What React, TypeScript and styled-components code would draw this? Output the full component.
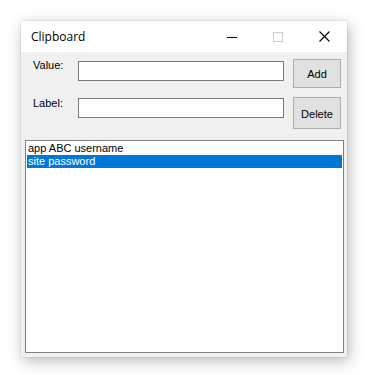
import React from "react";
import styled, { createGlobalStyle } from "styled-components";

const Global = createGlobalStyle`
  html, body { margin: 0; padding: 0; background: #ffffff; }
  body { font-family: "Liberation Sans", Arial, sans-serif; }
`;

const Page = styled.div`
  width: 372px;
  height: 375px;
  padding: 21px 0 0 21px;
  box-sizing: border-box;
`;

const Window = styled.div`
  width: 326px;
  height: 336px;
  display: flex;
  flex-direction: column;
  background: #f0f0f0;
  box-shadow: 0 0 1px rgba(0, 0, 0, 0.35), 2px 4px 14px rgba(0, 0, 0, 0.28);
`;

const TitleBar = styled.div`
  height: 31px;
  flex: none;
  background: #ffffff;
  display: flex;
  align-items: center;
  padding-left: 10px;
`;

const Title = styled.div`
  flex: 1;
  font-family: "Open Sans", "Noto Sans", sans-serif;
  font-size: 12px;
  color: #000;
  margin-top: -1px;
`;

const CaptionButton = styled.div`
  width: 46px;
  height: 31px;
  display: flex;
  align-items: center;
  justify-content: center;
`;

const Body = styled.div`
  flex: 1;
  display: flex;
  flex-direction: column;
  padding: 7px 0 0 4px;
`;

const FormRow = styled.div<{ $gap: number }>`
  display: flex;
  align-items: flex-start;
  margin-bottom: ${(p) => p.$gap}px;
`;

const FieldLabel = styled.div<{ $top: number }>`
  width: 45px;
  margin-left: 8px;
  margin-top: ${(p) => p.$top}px;
  font-size: 11px;
  line-height: 13px;
  color: #000;
`;

const TextBox = styled.input<{ $top: number }>`
  width: 206px;
  height: 20px;
  box-sizing: border-box;
  margin: ${(p) => p.$top}px 0 0 0;
  border: 1px solid #7a7a7a;
  background: #fff;
  padding: 0 2px;
  font-family: "Liberation Sans", Arial, sans-serif;
  font-size: 11px;
  outline: none;
`;

const Button = styled.button<{ $h: number }>`
  width: 48px;
  height: ${(p) => p.$h}px;
  margin-left: 9px;
  box-sizing: border-box;
  border: 1px solid #adadad;
  background: #e1e1e1;
  font-family: "Liberation Sans", Arial, sans-serif;
  font-size: 11px;
  color: #000;
  padding: 0;
  padding-top: 1px;
`;

const ListBox = styled.div`
  width: 319px;
  height: 213px;
  box-sizing: border-box;
  border: 1px solid #828282;
  background: #fff;
  padding: 1px 1px 0 1px;
`;

const ListItem = styled.div<{ $selected?: boolean }>`
  height: 13px;
  line-height: 13px;
  font-size: 11px;
  padding-left: 1px;
  color: ${(p) => (p.$selected ? "#fff" : "#000")};
  background: ${(p) => (p.$selected ? "#0078d7" : "transparent")};
  white-space: nowrap;
`;

export default function App() {
  return (
    <>
      <Global />
      <Page>
        <Window>
          <TitleBar>
            <Title>Clipboard</Title>
            <CaptionButton>
              <svg width="10" height="10" viewBox="0 0 10 10">
                <path d="M0 5.5 H10" stroke="#000" strokeWidth="1" />
              </svg>
            </CaptionButton>
            <CaptionButton>
              <svg width="10" height="10" viewBox="0 0 10 10">
                <rect x="0.5" y="0.5" width="9" height="9" fill="none" stroke="#cccccc" strokeWidth="1" />
              </svg>
            </CaptionButton>
            <CaptionButton>
              <svg width="11" height="11" viewBox="0 0 11 11">
                <path d="M0.5 0.5 L10.5 10.5 M10.5 0.5 L0.5 10.5" stroke="#000" strokeWidth="1.1" />
              </svg>
            </CaptionButton>
          </TitleBar>
          <Body>
            <FormRow $gap={9}>
              <FieldLabel $top={0}>Value:</FieldLabel>
              <TextBox $top={2} />
              <Button $h={29}>Add</Button>
            </FormRow>
            <FormRow $gap={11}>
              <FieldLabel $top={0}>Label:</FieldLabel>
              <TextBox $top={1} />
              <Button $h={32}>Delete</Button>
            </FormRow>
            <ListBox>
              <ListItem>app ABC username</ListItem>
              <ListItem $selected>site password</ListItem>
            </ListBox>
          </Body>
        </Window>
      </Page>
    </>
  );
}
